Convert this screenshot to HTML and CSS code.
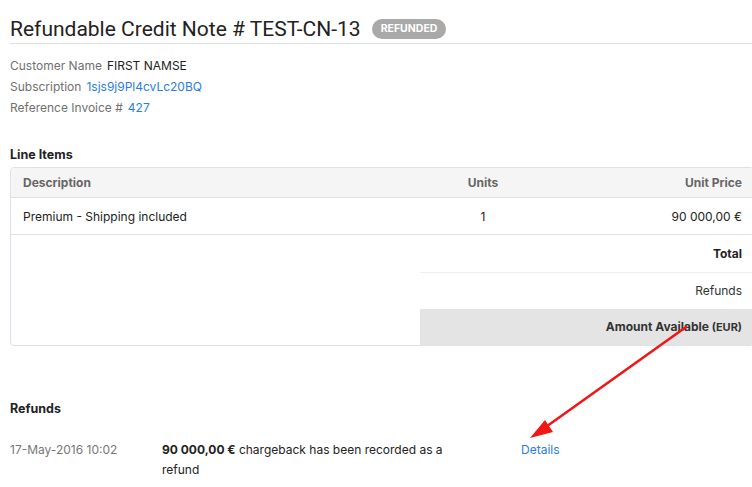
FILE: index.html
```
<!DOCTYPE html>
<html>
<head>
<meta charset="utf-8">
<link rel="stylesheet" href="styles.css">
</head>
<body>
<div class="page">
  <header class="title-bar">
    <h1 class="title">Refundable Credit Note # TEST-CN-13</h1>
    <span class="badge">REFUNDED</span>
  </header>
  <div class="meta">
    <div class="meta-row"><span class="label">Customer Name</span><span class="value">FIRST NAMSE</span></div>
    <div class="meta-row"><span class="label">Subscription</span><a class="link">1sjs9j9Pl4cvLc20BQ</a></div>
    <div class="meta-row"><span class="label">Reference Invoice #</span><a class="link">427</a></div>
  </div>

  <h2 class="section-title line-title">Line Items</h2>
  <div class="table">
    <div class="row head">
      <div class="c-desc">Description</div>
      <div class="c-units">Units</div>
      <div class="c-price">Unit Price</div>
    </div>
    <div class="row item">
      <div class="c-desc">Premium - Shipping included</div>
      <div class="c-units">1</div>
      <div class="c-price">90 000,00 €</div>
    </div>
    <div class="totals">
      <div class="t-row t-total">Total</div>
      <div class="t-row t-refunds">Refunds</div>
      <div class="t-row t-avail">Amount Available <span class="cur">(EUR)</span></div>
    </div>
  </div>

  <h2 class="section-title refunds-title">Refunds</h2>
  <div class="refund">
    <div class="r-date">17-May-2016 10:02</div>
    <div class="r-desc"><b>90 000,00 €</b> chargeback has been recorded as a refund</div>
    <a class="link r-link">Details</a>
  </div>
</div>
<svg class="arrow" width="752" height="487" viewBox="0 0 752 487">
  <line x1="686" y1="327" x2="543" y2="429" stroke="#f21616" stroke-width="2.6" stroke-linecap="round"/>
  <polygon points="530,438 545,420 553,432" fill="#f21616"/>
</svg>
</body>
</html>
```
FILE: styles.css
```
html, body { margin: 0; padding: 0; background: #fff; overflow: hidden; }
body { width: 752px; height: 487px; position: relative; font-family: Inter, "Liberation Sans", sans-serif; color: #333; }
.page { padding: 0 0 0 10px; width: 744px; }
.title-bar { display: flex; align-items: flex-end; height: 41px; padding-bottom: 2px; border-bottom: 1px solid #dde1ea; margin-right: -10px; }
.title { margin: 0; font-family: Roboto, "Liberation Sans", sans-serif; font-weight: 400; font-size: 21px; line-height: 24px; color: #222; }
.badge { margin-left: 11px; margin-bottom: 2px; background: #a9a9a9; color: #fff; font-weight: 700; font-size: 10.5px; border-radius: 10px; padding: 4px 9px; line-height: 12px; }
.meta { padding-top: 11px; }
.meta-row { font-size: 12px; line-height: 21px; }
.label { color: #707070; margin-right: 5px; }
.value { color: #222; }
.link { color: #2b7de1; text-decoration: none; }
.section-title { margin: 0; font-size: 12.5px; font-weight: 700; color: #222; }
.line-title { margin-top: 29px; line-height: 16px; }
.table { margin-top: 4px; border: 1px solid #dde1ea; border-radius: 4px; }
.row { display: flex; align-items: center; font-size: 12px; }
.row.head { height: 29px; background: #f5f5f5; color: #666; font-weight: 700; border-bottom: 1px solid #dde1ea; border-radius: 4px 0 0 0; }
.row.item { height: 36px; border-bottom: 1px solid #dde1ea; color: #222; }
.c-desc { flex: 1; padding-left: 12px; }
.c-units { width: 130px; text-align: center; }
.c-price { width: 194px; text-align: right; padding-right: 11px; }
.totals { margin-left: 409px; font-size: 12px; }
.t-row { text-align: right; padding-right: 11px; height: 37px; line-height: 37px; }
.t-total { font-weight: 700; color: #222; border-bottom: 1px solid #eceef2; }
.t-refunds { color: #333; height: 36px; line-height: 36px; }
.t-avail { background: #e4e4e4; font-weight: 700; color: #333; height: 36px; line-height: 36px; }
.cur { font-size: 11px; }
.refunds-title { margin-top: 55px; line-height: 16px; }
.refund { display: flex; margin-top: 23px; font-size: 12px; line-height: 20px; }
.r-date { width: 152px; color: #777; }
.r-desc { width: 290px; color: #222; }
.r-link { margin-left: 69px; }
.arrow { position: absolute; left: 0; top: 0; pointer-events: none; }
```
